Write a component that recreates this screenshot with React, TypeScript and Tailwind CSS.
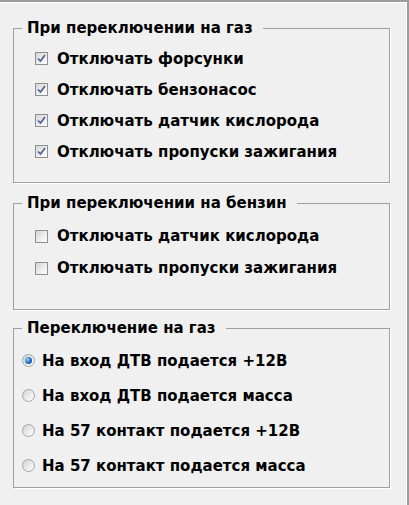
import React from "react";

const font = { fontFamily: '"DejaVu Sans", Verdana, sans-serif' };

function Check({ checked }: { checked: boolean }) {
  return (
    <span className="relative w-[13px] h-[13px] border border-[#8e8f8f] bg-gradient-to-br from-[#d6d6d6] to-[#ffffff] flex items-center justify-center shrink-0">
      {checked && (
        <svg width="9" height="9" viewBox="0 0 9 9">
          <path d="M1 4.5 L3.5 7 L8 1" stroke="#4a5f97" strokeWidth="1.7" fill="none" />
        </svg>
      )}
    </span>
  );
}

function Radio({ checked }: { checked: boolean }) {
  return (
    <span className="relative w-[13px] h-[13px] rounded-full border border-[#a4a4a4] bg-gradient-to-br from-[#d4d4d4] to-[#ffffff] flex items-center justify-center shrink-0">
      {checked && (
        <span className="w-[7px] h-[7px] rounded-full bg-[radial-gradient(circle_at_35%_35%,#8ad0ff,#1a63b8_60%,#0d3f86)]" />
      )}
    </span>
  );
}

function Group({
  title,
  className,
  children,
}: {
  title: string;
  className: string;
  children: React.ReactNode;
}) {
  return (
    <fieldset
      className={
        "border border-[#a0a0a0] shadow-[1px_1px_0_#ffffff] ml-[13px] w-[377px] " + className
      }
    >
      <legend className="ml-[8px] pl-[5px] pr-[10px] text-[15px] leading-[16px] font-bold text-black">
        {title}
      </legend>
      {children}
    </fieldset>
  );
}

export default function App() {
  const gasOff = [
    "Отключать форсунки",
    "Отключать бензонасос",
    "Отключать датчик кислорода",
    "Отключать пропуски зажигания",
  ];
  const petrolOff = ["Отключать датчик кислорода", "Отключать пропуски зажигания"];
  const radios = [
    "На вход ДТВ подается +12В",
    "На вход ДТВ подается масса",
    "На 57 контакт подается +12В",
    "На 57 контакт подается масса",
  ];
  return (
    <div
      style={font}
      className="w-[409px] h-[505px] bg-[#f0f0f0] border-t-2 border-r-2 border-[#9c9c9c] shadow-[inset_-1px_1px_0_#ffffff] overflow-hidden"
    >
      <div className="pt-[18px] flex flex-col">
        <Group title="При переключении на газ" className="h-[163px]">
          <div className="flex flex-col pt-[7px]">
            {gasOff.map((t) => (
              <div key={t} className="h-[31px] flex items-center pl-[21px] gap-[9px]">
                <Check checked />
                <span className="text-[15px] leading-[18px] font-bold text-black">{t}</span>
              </div>
            ))}
          </div>
        </Group>
        <Group title="При переключении на бензин" className="h-[115px] mt-[12px]">
          <div className="flex flex-col pt-[9px]">
            {petrolOff.map((t) => (
              <div key={t} className="h-[32px] flex items-center pl-[21px] gap-[9px]">
                <Check checked={false} />
                <span className="text-[15px] leading-[18px] font-bold text-black">{t}</span>
              </div>
            ))}
          </div>
        </Group>
        <Group title="Переключение на газ" className="h-[168px] mt-[10px]">
          <div className="flex flex-col pt-[7px]">
            {radios.map((t, i) => (
              <div key={t} className="h-[35px] flex items-center pl-[8px] gap-[7px]">
                <Radio checked={i === 0} />
                <span className="text-[15px] leading-[18px] font-bold text-black">{t}</span>
              </div>
            ))}
          </div>
        </Group>
      </div>
    </div>
  );
}
